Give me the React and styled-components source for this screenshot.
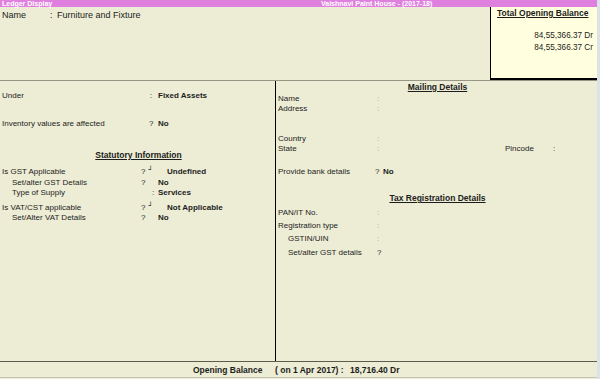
import React from 'react';
import styled, {createGlobalStyle} from 'styled-components';

const GlobalStyle = createGlobalStyle`
    html, body {
        margin: 0;
        padding: 0;
        background: #dde1e8;
    }
    body {
        font-family: "Liberation Sans", Arial, sans-serif;
        color: #1c1c1c;
    }
`;

const Screen = styled.div`
    width: 597px;
    height: 379px;
    display: flex;
    flex-direction: column;
    background: #ededd5;
    overflow: hidden;
`;

const TitleBar = styled.div`
    height: 7px;
    flex-shrink: 0;
    display: flex;
    align-items: center;
    padding-left: 2px;
    background: #df80df;
    color: #fff;
    font-size: 7px;
    font-weight: bold;
    line-height: 7px;
    white-space: nowrap;
`;

const TitleText = styled.span`
    width: ${p => p.$w ? `${p.$w}px` : 'auto'};
`;

const TopArea = styled.div`
    height: 73px;
    flex-shrink: 0;
    display: flex;
    border-bottom: 1px solid #979786;
`;

const NameBlock = styled.div`
    flex: 1;
    padding: 3px 0 0 2px;
`;

const BalanceBox = styled.div`
    width: 102px;
    display: flex;
    flex-direction: column;
    align-items: flex-end;
    padding: 1px 4px 0 0;
    background: #ffffdf;
    border-left: 1px solid #000;
    border-bottom: 2px solid #000;
    font-size: 8px;
`;

const BoxHeading = styled.div`
    align-self: flex-start;
    padding-left: 6px;
    font-size: 8.5px;
    font-weight: bold;
    line-height: 10px;
    text-decoration: underline;
    white-space: nowrap;
`;

const Amount = styled.div`
    margin-top: ${p => p.$mt}px;
    line-height: 12px;
    font-size: 8.2px;
    white-space: nowrap;
`;

const Body = styled.div`
    height: 280px;
    flex-shrink: 0;
    display: flex;
`;

const Pane = styled.div`
    display: flex;
    flex-direction: column;
    padding-left: 2px;
    font-size: 8px;
`;

const LeftPane = styled(Pane)`
    width: 273px;
    border-right: 1px solid #000;
`;

const RightPane = styled(Pane)`
    flex: 1;
`;

const Row = styled.div`
    display: flex;
    align-items: baseline;
    margin-top: ${p => p.$mt || 0}px;
    line-height: 10px;
    font-size: ${p => p.$big ? 9 : 8}px;
    white-space: nowrap;
`;

const Label = styled.span`
    flex-shrink: 0;
    width: ${p => p.$w}px;
    padding-left: ${p => p.$indent || 0}px;
    box-sizing: border-box;
`;

const Sep = styled.span`
    flex-shrink: 0;
    width: ${p => p.$w}px;
    color: ${p => p.$faint ? '#a3a393' : 'inherit'};
`;

const Mark = styled.span`
    position: relative;
    top: -2px;
    margin-left: 3px;
    font-family: "DejaVu Sans", sans-serif;
    font-size: 7px;
    font-weight: bold;
`;

const Value = styled.span`
    font-weight: ${p => p.$plain ? 'normal' : 'bold'};
`;

const Heading = styled.div`
    margin-top: ${p => p.$mt}px;
    text-align: center;
    line-height: 10px;
    font-size: 8.5px;
    font-weight: bold;
    text-decoration: underline;
`;

const Footer = styled.div`
    height: 15px;
    flex-shrink: 0;
    display: flex;
    align-items: center;
    padding-left: 193px;
    border-top: 1px solid #5c5c4c;
    border-bottom: 1px solid #c4c4b4;
    font-size: 8.5px;
    font-weight: bold;
    white-space: nowrap;
`;

const FooterPart = styled.span`
    width: ${p => p.$w ? `${p.$w}px` : 'auto'};
    flex-shrink: 0;
`;

const Field = ({label, w, sep = ':', sepW, mt, indent, faint, mark, children}) => (
    <Row $mt={mt}>
        <Label $w={w} $indent={indent}>{label}</Label>
        <Sep $w={sepW} $faint={faint}>{sep}{mark && <Mark>┘</Mark>}</Sep>
        {children && <Value>{children}</Value>}
    </Row>
);

const App = () => {
    return (
        <>
            <GlobalStyle/>
            <Screen>
                <TitleBar>
                    <TitleText $w={319}>Ledger Display</TitleText>
                    <TitleText>Vaishnavi Paint House - (2017-18)</TitleText>
                </TitleBar>

                <TopArea>
                    <NameBlock>
                        <Row $big>
                            <Label $w={48}>Name</Label>
                            <Sep $w={7}>:</Sep>
                            <Value $plain>Furniture and Fixture</Value>
                        </Row>
                    </NameBlock>
                    <BalanceBox>
                        <BoxHeading>Total Opening Balance</BoxHeading>
                        <Amount $mt={12}>84,55,366.37 Dr</Amount>
                        <Amount $mt={0}>84,55,366.37 Cr</Amount>
                    </BalanceBox>
                </TopArea>

                <Body>
                    <LeftPane>
                        <Field label='Under' w={148} sepW={8} mt={10}>Fixed Assets</Field>
                        <Field label='Inventory values are affected' w={147} sep='?' sepW={9} mt={18}>No</Field>

                        <Heading $mt={21}>Statutory Information</Heading>
                        <Field label='Is GST Applicable' w={139} sep='?' sepW={26} mark mt={7}>Undefined</Field>
                        <Field label='Set/alter GST Details' w={139} indent={10} sep='?' sepW={17} mt={1}>No</Field>
                        <Field label='Type of Supply' w={150} indent={10} sepW={6}>Services</Field>
                        <Field label='Is VAT/CST applicable' w={139} sep='?' sepW={26} mark mt={5}>Not Applicable</Field>
                        <Field label='Set/Alter VAT Details' w={139} indent={10} sep='?' sepW={17}>No</Field>
                    </LeftPane>

                    <RightPane>
                        <Heading $mt={1}>Mailing Details</Heading>
                        <Field label='Name' w={99} sepW={8} faint mt={2}/>
                        <Field label='Address' w={99} sepW={8} faint/>
                        <Field label='Country' w={99} sepW={8} faint mt={20}/>
                        <Row>
                            <Label $w={99}>State</Label>
                            <Sep $w={128} $faint>:</Sep>
                            <Label $w={48}>Pincode</Label>
                            <Sep $w={8}>:</Sep>
                        </Row>
                        <Field label='Provide bank details' w={97} sep='?' sepW={8} mt={13}>No</Field>

                        <Heading $mt={16}>Tax Registration Details</Heading>
                        <Field label='PAN/IT No.' w={99} sepW={8} faint mt={5}/>
                        <Field label='Registration type' w={99} sepW={8} faint mt={3}/>
                        <Field label='GSTIN/UIN' w={99} indent={10} sepW={8} faint mt={3}/>
                        <Field label='Set/alter GST details' w={99} indent={10} sep='?' sepW={8} mt={4}/>
                    </RightPane>
                </Body>

                <Footer>
                    <FooterPart $w={82}>Opening Balance</FooterPart>
                    <FooterPart $w={75}>( on 1 Apr 2017) :</FooterPart>
                    <FooterPart $w={40}>18,716.40</FooterPart>
                    <FooterPart>Dr</FooterPart>
                </Footer>
            </Screen>
        </>
    );
};

export default App;
